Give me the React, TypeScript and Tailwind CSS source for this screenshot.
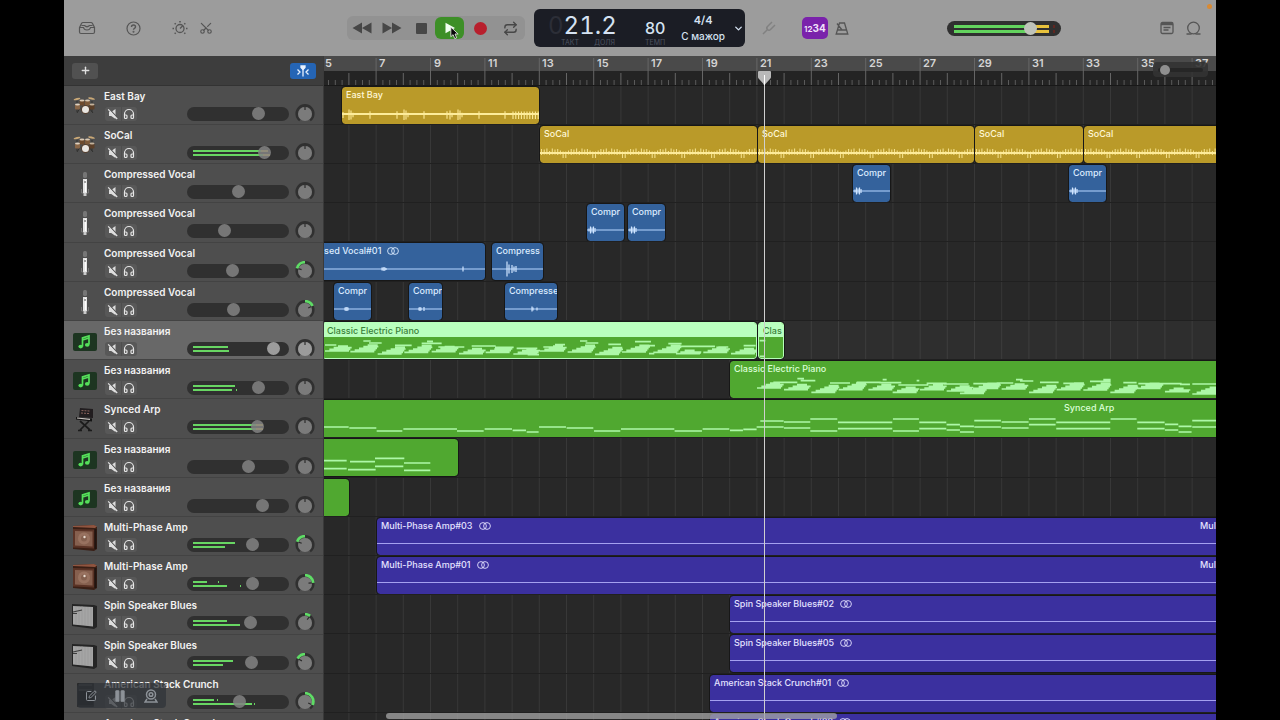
import React, { useState } from 'react';
import { ChevronDown, Headphones, Pause, Plus, Repeat, Scissors, SquarePen } from 'lucide-react';

type Kind = 'drums' | 'mic' | 'midi' | 'synth' | 'amp' | 'speaker' | 'stack';
type Color = 'yellow' | 'blue' | 'green' | 'purple';
type Seg = [number, number, number];

interface Clip {
  label?: string;
  x: number;
  w?: number;
  color: Color;
  labelX?: number;
  stereo?: boolean;
  selected?: boolean;
  wave?: 'beat' | 'groove' | 'line';
  hits?: [number, number][];
  notes?: Seg[];
  trailing?: string;
}

interface Track {
  name: string;
  kind: Kind;
  volume: number;
  pan?: number;
  meter?: [number, number];
  peaks?: [number, number];
  hot?: boolean;
  selected?: boolean;
  clips: Clip[];
}

const BAR = 27.2;
const barX = (bar: number) => 215.3 + BAR * (bar - 13);
const BARS = Array.from({ length: 60 }, (_, i) => i + 5);
const LAST_LABEL = 37;

// Chord figures: [x, bottom y, number of stacked notes], in thirds of a pixel
const CHORDS_A: Seg[] = [[0, 84, 3], [76, 86, 4], [158, 93, 4], [238, 88, 4], [320, 86, 3], [402, 92, 3], [482, 88, 3], [565, 93, 3], [645, 84, 3], [728, 87, 4], [810, 94, 4], [891, 87, 4], [985, 88, 4], [1053, 92, 2], [1135, 88, 3], [1218, 92, 3]];
const LEADS_A: Seg[] = [[0, 66, 34], [115, 54, 22], [132, 60, 38], [210, 67, 50], [290, 61, 60], [306, 55, 18], [340, 72, 78], [440, 69, 72], [510, 73, 56], [575, 76, 62], [655, 72, 34], [690, 65, 30], [765, 54, 22], [782, 60, 38], [850, 64, 38], [930, 56, 48], [960, 68, 30], [1030, 62, 40], [1060, 70, 110], [1180, 72, 30], [1256, 68, 36], [608, 95, 34], [972, 92, 16], [1098, 90, 30]];
const CHORDS_B: Seg[] = [[81, 81, 3], [162, 86, 3], [244, 94, 4], [326, 86, 4], [415, 86, 3], [488, 94, 3], [570, 86, 3], [650, 90, 3], [690, 97, 3], [733, 82, 3], [815, 84, 3], [897, 94, 4], [980, 86, 4], [1060, 87, 4], [1141, 94, 4], [1220, 82, 3], [1305, 92, 2], [1387, 99, 4]];
const LEADS_B: Seg[] = [[130, 64, 72], [202, 53, 20], [212, 59, 44], [300, 66, 60], [380, 64, 72], [458, 56, 12], [448, 65, 66], [505, 72, 90], [560, 59, 8], [590, 67, 60], [640, 69, 76], [730, 68, 80], [800, 66, 50], [858, 56, 20], [870, 60, 40], [930, 64, 56], [1000, 67, 60], [1080, 61, 62], [1120, 56, 22], [1180, 65, 40], [1225, 68, 130], [1350, 70, 30], [1387, 69, 110]];

const chord = ([x, y, n]: Seg): Seg[] =>
  Array.from({ length: n + 1 }, (_, i): Seg => [x + i * 13, y - i * 5, i === n ? 30 : 72 - i * 9]);

const BASS: Seg[] = [[0, 81, 74], [76, 84, 81], [158, 93, 77], [238, 87, 161], [399, 93, 80], [482, 87, 82], [566, 91, 40], [608, 96, 36], [645, 81, 81], [728, 84, 80], [810, 93, 79], [891, 87, 160], [1052, 93, 82], [1136, 87, 80], [1218, 91, 39], [1258, 88, 40],
  [1298, 81, 81], [1380, 84, 79], [1459, 93, 81], [1542, 86, 163], [1707, 93, 78], [1786, 86, 81], [1868, 90, 40], [1908, 96, 42], [1951, 81, 80], [2033, 84, 81], [2115, 74, 80], [2197, 86, 162], [2440, 86, 82], [2523, 90, 40], [2564, 96, 39], [2605, 81, 90],
  [1309, 63, 70], [1380, 66, 79], [1459, 57, 81], [1542, 67, 163], [1707, 57, 78], [1786, 67, 81], [1868, 74, 40], [1908, 79, 42], [1951, 62, 80], [2033, 66, 81], [2115, 57, 80], [2197, 67, 162], [2360, 57, 78], [2440, 67, 82], [2523, 73, 40], [2564, 79, 39], [2605, 62, 90]];
const PADS: Seg[] = [[0, 65, 68], [78, 68, 75], [153, 58, 88], [240, 72, 79], [0, 89, 68], [72, 92, 83], [153, 82, 85], [240, 94, 79]];

const VOCAL_HITS: [number, number][] = [[2, 3], [3.5, 7], [5, 5], [6.5, 7], [8, 4]];

const TRACKS: Track[] = [
  { name: 'East Bay', kind: 'drums', volume: 65, clips: [{ label: 'East Bay', x: 18, w: 197, color: 'yellow', wave: 'beat' }] },
  { name: 'SoCal', kind: 'drums', volume: 71, meter: [75, 77], hot: true, clips: [
    { label: 'SoCal', x: 216, w: 217, color: 'yellow', wave: 'groove' },
    { label: 'SoCal', x: 434, w: 216, color: 'yellow', wave: 'groove' },
    { label: 'SoCal', x: 651, w: 108, color: 'yellow', wave: 'groove' },
    { label: 'SoCal', x: 760, color: 'yellow', wave: 'groove' },
  ] },
  { name: 'Compressed Vocal', kind: 'mic', volume: 45, clips: [
    { label: 'Compr', x: 529, w: 37, color: 'blue', wave: 'line', hits: VOCAL_HITS },
    { label: 'Compr', x: 745, w: 37, color: 'blue', wave: 'line', hits: VOCAL_HITS },
  ] },
  { name: 'Compressed Vocal', kind: 'mic', volume: 31, clips: [
    { label: 'Compr', x: 263, w: 37, color: 'blue', wave: 'line', hits: VOCAL_HITS },
    { label: 'Compr', x: 304, w: 37, color: 'blue', wave: 'line', hits: VOCAL_HITS },
  ] },
  { name: 'Compressed Vocal', kind: 'mic', volume: 39, pan: -75, clips: [
    { label: 'Compressed Vocal#01', x: -43, w: 204, color: 'blue', wave: 'line', stereo: true, hits: [[101, 3], [102, 3], [103, 4], [104, 3], [105, 2], [182, 5]] },
    { label: 'Compress', x: 168, w: 51, color: 'blue', wave: 'line', hits: [[15, 15], [17, 9], [20, 8], [22, 5], [24, 6]] },
  ] },
  { name: 'Compressed Vocal', kind: 'mic', volume: 40, pan: 65, clips: [
    { label: 'Compr', x: 10, w: 37, color: 'blue', wave: 'line', hits: [[11, 3], [12, 4], [13, 4], [14, 3]] },
    { label: 'Compr', x: 85, w: 33, color: 'blue', wave: 'line', hits: [[10, 3], [11, 4], [12, 3], [15, 4]] },
    { label: 'Compresse', x: 181, w: 52, color: 'blue', wave: 'line', hits: [[27, 5], [28, 3], [32, 3]] },
  ] },
  { name: 'Без названия', kind: 'midi', volume: 80, meter: [35, 36], selected: true, clips: [
    { label: 'Classic Electric Piano', x: -2, w: 435, labelX: 4, color: 'green', selected: true, notes: [...CHORDS_A.flatMap(chord), ...LEADS_A] },
    { label: 'Clas', x: 434, w: 26, color: 'green', selected: true, notes: [[2, 53, 17], [2, 100, 14]] },
  ] },
  { name: 'Без названия', kind: 'midi', volume: 65, meter: [42, 39], peaks: [0, 43], clips: [
    { label: 'Classic Electric Piano', x: 406, color: 'green', notes: [...CHORDS_B.flatMap(chord), ...LEADS_B] },
  ] },
  { name: 'Synced Arp', kind: 'synth', volume: 64, meter: [70, 70], hot: true, clips: [
    { label: 'Synced Arp', x: -4, labelX: 744, color: 'green', notes: BASS },
  ] },
  { name: 'Без названия', kind: 'midi', volume: 55, clips: [{ x: -4, w: 138, color: 'green', notes: PADS }] },
  { name: 'Без названия', kind: 'midi', volume: 69, clips: [{ x: -4, w: 29, color: 'green' }] },
  { name: 'Multi-Phase Amp', kind: 'amp', volume: 59, pan: -70, meter: [42, 32], clips: [
    { label: 'Multi-Phase Amp#03', x: 53, color: 'purple', wave: 'line', stereo: true, trailing: 'Mul' },
  ] },
  { name: 'Multi-Phase Amp', kind: 'amp', volume: 59, pan: 85, meter: [14, 34], peaks: [25, 47], clips: [
    { label: 'Multi-Phase Amp#01', x: 53, color: 'purple', wave: 'line', stereo: true, trailing: 'Mul' },
  ] },
  { name: 'Spin Speaker Blues', kind: 'speaker', volume: 57, pan: 38, meter: [34, 47], clips: [
    { label: 'Spin Speaker Blues#02', x: 406, color: 'purple', wave: 'line', stereo: true },
  ] },
  { name: 'Spin Speaker Blues', kind: 'speaker', volume: 58, pan: -62, meter: [40, 30], clips: [
    { label: 'Spin Speaker Blues#05', x: 406, color: 'purple', wave: 'line', stereo: true },
  ] },
  { name: 'American Stack Crunch', kind: 'stack', volume: 46, pan: 115, meter: [21, 59], peaks: [24, 61], clips: [
    { label: 'American Stack Crunch#01', x: 386, color: 'purple', wave: 'line', stereo: true },
  ] },
  { name: 'American Stack Crunch', kind: 'stack', volume: 46, clips: [
    { label: 'American Stack Crunch#02', x: 386, color: 'purple', wave: 'line', stereo: true },
  ] },
];

const CLIP_BG: Record<Color, string> = {
  yellow: 'bg-[#ba9a29] text-[#fff8d8]',
  blue: 'bg-[#34629c] text-[#dcecff]',
  green: 'bg-[#50a830] text-[#dcffd8]',
  purple: 'bg-[#3b309f] text-[#e4e2ff]',
};
const INK: Record<Color, string> = { yellow: '#fdec9a', blue: '#b5d6ff', green: '#adf8a8', purple: '#a5a0f0' };

function TrackIcon({ kind }: { kind: Kind }) {
  if (kind === 'drums') return (
    <svg viewBox="0 0 25 26" className="w-[25px] h-[26px]">
      <path d="M5 7v11M20 7v11M8 14l-3 5M17 14l4 5" stroke="#30302e" strokeWidth="1" />
      <ellipse cx="5" cy="5" rx="3.500" ry="1" fill="#c9a877" transform="rotate(-14 5 5)" />
      <ellipse cx="19.500" cy="4.500" rx="3.500" ry="1" fill="#c9a877" transform="rotate(14 19.500 4.500)" />
      <rect x="7.500" y="6.500" width="5" height="5" rx="1" fill="#6d4a2d" /><rect x="13" y="6.500" width="5" height="5" rx="1" fill="#7d5a3a" />
      <ellipse cx="10" cy="6.500" rx="2.500" ry="1" fill="#d9c9b5" /><ellipse cx="15.500" cy="6.500" rx="2.500" ry="1" fill="#d9c9b5" />
      <rect x="3" y="10.500" width="5" height="5" rx="1" fill="#8a6748" /><rect x="17.500" y="10.500" width="5" height="5" rx="1" fill="#5b3f28" />
      <ellipse cx="5.500" cy="10.500" rx="2.500" ry="1" fill="#e0d2c0" /><ellipse cx="20" cy="10.500" rx="2.500" ry="1" fill="#c4b39d" />
      <circle cx="13.500" cy="15.500" r="4.200" fill="#5a3b24" /><circle cx="13.500" cy="15.500" r="3.500" fill="#e9e6e2" />
    </svg>
  );
  if (kind === 'mic') return (
    <svg viewBox="0 0 25 26" className="w-[25px] h-[26px]">
      <rect x="11" y="0" width="4" height="6" rx="1.500" fill="#767676" />
      <path d="M9.500 17v4h7v-4" fill="none" stroke="#747474" />
      <rect x="11" y="7" width="4" height="14" fill="#e4e4e4" /><path d="M13.500 8v12" stroke="#fff" strokeWidth="1" />
      <rect x="12" y="9" width="2" height="2" fill="#a0a0a0" /><rect x="11.500" y="21" width="3" height="3" fill="#c9c9c9" />
    </svg>
  );
  if (kind === 'midi') return (
    <svg viewBox="0 0 25 26" className="w-[25px] h-[26px]">
      <rect x="1" y="4" width="24" height="18" rx="2" fill="#1d3521" />
      <path d="M10.500 17.500V9l6.500-2v8.500M10.500 11l6.500-2" fill="none" stroke="#55e05a" strokeWidth="1.700" />
      <ellipse cx="8.700" cy="17.600" rx="2.300" ry="1.800" fill="#55e05a" /><ellipse cx="15.200" cy="15.900" rx="2.300" ry="1.800" fill="#55e05a" />
    </svg>
  );
  if (kind === 'synth') return (
    <svg viewBox="0 0 25 26" className="w-[25px] h-[26px]">
      <path d="M8 1l13 1v9l-14-1z" fill="#211d1f" /><path d="M9.500 3.500l9 .6M9 6l9 .6" stroke="#87625c" strokeWidth="1" strokeDasharray="2 1" />
      <path d="M4 10l16 1.500v3L4 12.500z" fill="#141414" /><path d="M5 11l13 1.300" stroke="#c9c3c0" strokeWidth="1.200" />
      <path d="M8 14l10 9M17 14l-9 9M6 23.500h4M16 23.500h4" stroke="#1b1b1b" strokeWidth="1.700" />
    </svg>
  );
  if (kind === 'amp') return (
    <svg viewBox="0 0 25 26" className="w-[25px] h-[26px]">
      <path d="M1 1l21-1 3 2v22l-3 2-21-2z" fill="#3a1f15" /><path d="M1 1l21-1 3 1.500-2 1.500-22-1z" fill="#905540" />
      <path d="M1 4l21 .5v19L1 22.500z" fill="#5a3326" /><path d="M3 6l17.500 .5v15L3 20.500z" fill="#86604f" />
      <circle cx="12" cy="13.500" r="6" fill="#987260" /><circle cx="12" cy="13.500" r="3" fill="#84604f" /><circle cx="12.500" cy="12" r="1.200" fill="#eadbd0" />
      <path d="M23.500 4v20" stroke="#201410" strokeWidth="2" />
    </svg>
  );
  if (kind === 'speaker') return (
    <svg viewBox="0 0 25 26" className="w-[25px] h-[26px]">
      <path d="M0 1l22 1 3 1v21l-3 2-22-3z" fill="#252525" /><path d="M1 3l20 1v19.500L1 21.500z" fill="#a5a5a5" />
      <path d="M4 3v18M7 3v19M10 3v19M13 4v18M16 4v19M19 4v19" stroke="#959595" strokeWidth=".6" />
      <path d="M1 9l9-2M1 10.500h4" stroke="#3d3d3d" strokeWidth="1.200" />
    </svg>
  );
  return (
    <svg viewBox="0 0 25 26" className="w-[25px] h-[26px]">
      <rect x="5" y="1" width="17" height="24" rx="1" fill="#262626" /><path d="M7 3h13M7 8h13" stroke="#555" /><path d="M6 9h15v14H6z" fill="#181818" />
    </svg>
  );
}

function PanKnob({ pan = 0, bright }: { pan?: number; bright?: boolean }) {
  const a = ((pan - 90) * Math.PI) / 180;
  const px = 10 + 8.300 * Math.cos(a);
  const py = 9.500 + 8.300 * Math.sin(a);
  return (
    <svg viewBox="0 0 20 20" className="w-5 h-5" role="img" aria-label="Pan">
      <path d="M5 16.300A8.300 8.300 0 1 1 15 16.300" fill="none" stroke="#303030" strokeWidth="2.600" />
      <circle cx="10" cy="10" r="7" fill={bright ? '#9b9b9b' : '#7b7b7b'} />
      <path d={`M${10 + 3.500 * Math.cos(a)} ${9.500 + 3.500 * Math.sin(a)}L${10 + 7 * Math.cos(a)} ${9.500 + 7 * Math.sin(a)}`} stroke="#2c2c2c" strokeWidth="1.200" />
      {pan !== 0 && <path d={`M10 1.200A8.300 8.300 0 0 ${pan > 0 ? 1 : 0} ${px} ${py}`} fill="none" stroke="#5fdc66" strokeWidth="2.800" />}
    </svg>
  );
}

function MuteIcon() {
  return (
    <svg viewBox="0 0 12 12" className="size-3">
      <path d="M2 4h2.200L8.500 1v10L4.200 8H2z" fill="#dcdcdc" />
      <path d="M2.200 1l8.800 9.500" stroke="#565656" strokeWidth="1.300" /><path d="M1.200 1.300l9 9.700" stroke="#e4e4e4" strokeWidth="1.200" />
    </svg>
  );
}

function VolumeSlider({ track, index }: { track: Track; index: number }) {
  const [value, setValue] = useState(track.volume);
  return (
    <div className="relative w-[102px] h-[14px] rounded-full bg-[#303030]">
      {track.meter && (
        <div className="absolute left-[6px] top-[4px] flex flex-col gap-[2px]">
          {track.meter.map((w, i) => (
            <div key={i} className="flex h-[2px]">
              <div className="bg-[#68d663]" style={{ width: track.hot ? w - 7 : w }} />
              {track.hot && <div className="w-[7px] bg-[#d9c24a]" />}
              {track.peaks && track.peaks[i] > 0 && <div className="w-px bg-[#68d663]" style={{ marginLeft: track.peaks[i] - w }} />}
            </div>
          ))}
        </div>
      )}
      <input
        type="range" min={0} max={89} value={value} aria-label={`${track.name} volume ${index + 1}`} onChange={e => setValue(Number(e.target.value))}
        className={`absolute inset-0 w-full h-full appearance-none bg-transparent [&::-webkit-slider-thumb]:appearance-none [&::-webkit-slider-thumb]:size-[13px] [&::-webkit-slider-thumb]:rounded-full ${track.selected ? '[&::-webkit-slider-thumb]:bg-[#9c9c9c]' : '[&::-webkit-slider-thumb]:bg-[#828282]/85'}`}
      />
    </div>
  );
}

function TrackHeader({ track, index }: { track: Track; index: number }) {
  return (
    <div className={`flex shrink-0 h-[39px] nth-[5n]:h-10 pl-2 pr-2 pt-px border-b border-[#434343] ${track.selected ? 'bg-[#686868]' : 'bg-[#4e4e4e]'}`}>
      <div className="w-8 pt-[7px]"><TrackIcon kind={track.kind} /></div>
      <div className="flex-1">
        <div className="h-[19px] leading-[19px] text-[10px] font-semibold text-[#f2f2f2] whitespace-nowrap">{track.name}</div>
        <div className="flex items-center h-[15px]">
          <div className="flex ml-px w-8 h-[14px] rounded-[3px] overflow-hidden bg-[#585858]">
            <button aria-label="Mute" className="flex-1 flex items-center justify-center border-r border-[#4e4e4e]"><MuteIcon /></button>
            <button aria-label="Solo" className="flex-1 flex items-center justify-center text-[#e6e6e6]"><Headphones size={12} strokeWidth={2.400} /></button>
          </div>
          <div className="ml-auto mr-[6px]"><VolumeSlider track={track} index={index} /></div>
          <PanKnob pan={track.pan} bright={track.selected} />
        </div>
      </div>
    </div>
  );
}

// Peaks for the drummer regions
const beatPath = Array.from({ length: 10 }, (_, i) => `M${171 + i * 2.800} 24.500v7.500`).join('')
  + [[1, 4], [7, 7], [9, 6], [11, 3], [28, 5], [55, 5], [62, 7], [64, 6], [66, 3], [82, 5], [105, 5], [108, 6], [110, 3], [116, 7], [118, 6], [120, 3], [137, 5], [163, 5]].map(([x, h]) => `M${x} ${28 - h / 1.300}v${h * 1.500}`).join('');
const groovePath = Array.from({ length: 90 }, (_, i) => {
  const k = (i * i * 5 + i * 3) % 11;
  const up = [4, 1.5, 2.500, 1.500, 4.500, 1.500, 2, 1.500, 3.500, 1.500, 2][k];
  const down = [2, 4.500, 1.500, 5, 1.500, 3.500, 1.500, 5, 1.500, 4, 2][k];
  return `M${1.500 + i * 2.700} ${27 - up}v${up + down}`;
}).join('');

function ClipArt({ clip }: { clip: Clip }) {
  const ink = INK[clip.color];
  const mid = clip.color === 'yellow' ? 27 : clip.color === 'blue' ? 26 : 25.5;
  return (
    <svg className="absolute inset-0 w-full h-full" aria-hidden="true">
      {clip.wave && <path d={`M0 ${mid}H2000`} stroke={ink} strokeWidth={clip.color === 'yellow' ? 1.800 : 1.200} />}
      {clip.wave === 'beat' && <path d={beatPath} stroke={ink} strokeWidth="1.100" />}
      {clip.wave === 'groove' && <path d={groovePath} stroke={ink} strokeWidth="1.100" opacity=".85" />}
      {clip.hits?.map(([x, h], i) => <path key={i} d={`M${x} ${mid - h / 2}v${h}`} stroke="#cfe4ff" strokeWidth="1.200" />)}
      {clip.notes && (
        <g transform={`translate(${Math.max(0, -clip.x)} 0) scale(.3333)`}>
          <path d={clip.notes.map(([x, y, l]) => `M${x} ${y}h${l}`).join('')} stroke={ink} strokeWidth="5" />
        </g>
      )}
    </svg>
  );
}

function StereoMark() {
  return (
    <svg viewBox="0 0 12 8" className="w-3 h-2 shrink-0" fill="none" stroke="currentColor" strokeWidth=".9">
      <circle cx="4" cy="4" r="3.400" /><circle cx="8" cy="4" r="3.400" />
    </svg>
  );
}

function ClipBox({ clip }: { clip: Clip }) {
  const size: React.CSSProperties = clip.w ? { left: clip.x, width: clip.w } : { left: clip.x, right: 0 };
  return (
    <div
      className={`absolute top-px h-[37px] overflow-hidden outline-1 outline-[#171717] ${clip.w ? 'rounded-[3px]' : 'rounded-l-[3px]'} ${CLIP_BG[clip.color]} ${clip.selected ? 'border border-[#b6ffb9]' : ''}`}
      style={size}
    >
      {clip.selected && <div className="h-[14px] bg-[#b9ffbe]" />}
      <ClipArt clip={clip} />
      <div
        className={`absolute inset-x-0 top-0 flex items-center gap-[6px] h-[15px] pl-1 text-[9px] font-medium whitespace-nowrap overflow-hidden ${clip.selected ? 'text-[#39803a]' : ''}`}
        style={clip.labelX ? { paddingLeft: clip.labelX } : undefined}
      >
        {clip.label}
        {clip.stereo && <StereoMark />}
        {clip.trailing && <span className="ml-auto w-4">{clip.trailing}</span>}
      </div>
    </div>
  );
}

function Ruler() {
  return (
    <div className="relative shrink-0 h-[30px] overflow-hidden bg-[#242424] border-b border-[#181818]">
      <div className="h-[15px] bg-[#4a4a4a]" />
      <svg className="absolute inset-0 w-full h-full" aria-hidden="true">
        <path d={BARS.map(b => `M${barX(b)} ${b % 2 ? 2 : 17}V30`).join('')} stroke="#666" />
        <path d={BARS.map(b => [1, 2, 3].map(q => `M${barX(b) + q * 6.800} 24V30`).join('')).join('')} stroke="#5a5a5a" />
      </svg>
      {BARS.filter(b => b % 2 && b <= LAST_LABEL).map(b => (
        <span key={b} className="absolute top-0 h-[15px] leading-[15px] text-[11px] font-semibold text-[#d4d4d4]" style={{ left: Math.round(barX(b)) + 3 }}>{b}</span>
      ))}
      <div className="absolute right-2 top-[6px] w-[55px] h-[15px] rounded-[4px] bg-[#333]/90">
        <input type="range" defaultValue={6} aria-label="Zoom" className="block w-full h-full px-[5px] appearance-none bg-transparent [&::-webkit-slider-runnable-track]:h-[4px] [&::-webkit-slider-runnable-track]:rounded-full [&::-webkit-slider-runnable-track]:bg-[#262626] [&::-webkit-slider-thumb]:appearance-none [&::-webkit-slider-thumb]:size-[10px] [&::-webkit-slider-thumb]:-mt-[3px] [&::-webkit-slider-thumb]:rounded-full [&::-webkit-slider-thumb]:bg-[#8f8f8f]" />
      </div>
    </div>
  );
}

function Transport() {
  return (
    <div className="flex items-center h-6 w-[178px] rounded-[6px] bg-[#929292] text-[#474747]">
      <button aria-label="Rewind" className="w-[29px] flex justify-center"><svg viewBox="0 0 20 12" className="w-5 h-3" fill="currentColor"><path d="M10 .5v11L.5 6zM19.500 .5v11L10 6z" /></svg></button>
      <button aria-label="Forward" className="w-8 flex justify-center"><svg viewBox="0 0 20 12" className="w-5 h-3" fill="currentColor"><path d="M10 .5v11L19.500 6zM.5 .5v11L10 6z" /></svg></button>
      <button aria-label="Stop" className="w-[27px] flex justify-center"><span className="size-[11px] rounded-[1px] bg-[#474747]" /></button>
      <button aria-label="Play" className="relative w-[29px] h-[22px] flex items-center justify-center rounded-[6px] bg-[#3d8f27]">
        <svg viewBox="0 0 12 12" className="size-3"><path d="M1.500 .8v10.400L11 6z" fill="#f0fff0" /></svg>
        <svg viewBox="0 0 12 16" className="absolute left-[15px] top-[9px] w-[10px] h-[14px]"><path d="M1 1v11.500l2.700-2.500 2 4.700 2.300-1-2-4.500h3.800z" fill="#080808" stroke="#eee" strokeWidth="1" /></svg>
      </button>
      <button aria-label="Record" className="w-8 flex justify-center"><span className="size-[13px] rounded-full bg-[#b81f2d]" /></button>
      <button aria-label="Cycle" className="flex-1 flex justify-center"><Repeat size={15} strokeWidth={2.200} /></button>
    </div>
  );
}

function Lcd() {
  return (
    <div className="flex items-center w-[211px] h-[38px] rounded-[6px] bg-[#1b1d25] text-[#d5e2f2]">
      <div className="ml-[14px] w-[67px] pt-[5px]">
        <div className="flex leading-6 text-[24px] tabular-nums">
          <span className="text-[#2c2e37]">0</span><span>21.</span><span className="ml-auto">2</span>
        </div>
        <div className="flex justify-between pl-[13px] leading-[9px] text-[7px] text-[#4d5360]"><span>ТАКТ</span><span>ДОЛЯ</span></div>
      </div>
      <div className="ml-[30px] flex flex-col items-center pt-[9px]">
        <span className="leading-5 text-[16px] font-medium">80</span>
        <span className="leading-[9px] text-[7px] text-[#4d5360]">ТЕМП</span>
      </div>
      <div className="ml-auto mr-2 text-center text-[11px] font-semibold leading-4"><div>4/4</div><div className="text-[10px] font-medium">С мажор</div></div>
      <button aria-label="Display mode" className="mr-px"><ChevronDown size={11} strokeWidth={3} /></button>
    </div>
  );
}

function Toolbar() {
  return (
    <header className="relative flex shrink-0 items-center h-14 bg-[#9c9c9c] text-[#555]">
      <div className="flex items-center pl-[14px] w-[283px]">
        <button aria-label="Library">
          <svg viewBox="0 0 18 14" className="w-[18px] h-[14px]" fill="none" stroke="currentColor" strokeWidth="1.200"><path d="M1.500 6.500l2-4q.5-1 1.500-1h8q1 0 1.500 1l2 4v4.500q0 1.500-1.500 1.500h-12q-1.500 0-1.500-1.500zM1.500 6.500h4q.5 2.500 3.500 2.500t3.500-2.500h4M3.500 4.500h3q2.500 2.500 5 0h3" /></svg>
        </button>
        <button aria-label="Help" className="ml-[30px]">
          <svg viewBox="0 0 15 15" className="size-[15px]" fill="none" stroke="currentColor" strokeWidth="1.200"><circle cx="7.500" cy="7.500" r="6.500" /><path d="M5.500 6q0-2 2-2t2 1.800q0 1-1 1.500t-1 1.500" strokeWidth="1.400" /><circle cx="7.500" cy="10.800" r=".4" /></svg>
        </button>
        <button aria-label="Smart controls" className="ml-[31px]">
          <svg viewBox="0 0 16 16" className="w-4 h-4" fill="none" stroke="currentColor" strokeWidth="1.300"><circle cx="8" cy="8.500" r="4" /><path d="M8 8.500l3-3" /><path d="M8 1v1.500M2.700 3.200l1 1M13.300 3.200l-1 1M.5 8.500H2M14 8.500h1.500M2.700 13.800l1-1M13.300 13.800l-1-1" strokeWidth="1.600" /></svg>
        </button>
        <button aria-label="Editors" className="ml-[11px]"><Scissors size={14} strokeWidth={2} className="-rotate-90" /></button>
      </div>
      <Transport />
      <div className="ml-[9px]"><Lcd /></div>
      <button aria-label="Tuner" className="ml-4 text-[#818181]">
        <svg viewBox="0 0 16 16" className="size-4" fill="none" stroke="currentColor" strokeWidth="1.500"><path d="M2 14l4.500-4.500M11 2L6.500 6.500q-1.500 1.500 0 3t3 0L14 5" /></svg>
      </button>
      <button aria-label="Count in" className="ml-[25px] w-[26px] h-[22px] rounded-[5px] bg-[#7a22ab] text-[#f1e2fa] font-bold text-[10px] leading-[22px]"><span className="text-[7px]">1</span><span className="text-[8px]">2</span>34</button>
      <button aria-label="Metronome" className="ml-[7px]">
        <svg viewBox="0 0 14 14" className="size-[14px]" fill="none" stroke="currentColor" strokeWidth="1.300"><path d="M4.500 2h5L12.800 13H1.200zM2.500 9h9M7 9L2 2.500" /></svg>
      </button>
      <div className="relative ml-auto mr-[99px] w-[114px] h-[15px] rounded-full bg-[#303030]">
        <div className="absolute left-[7px] top-[4px] flex flex-col gap-[2px]">
          {[0, 1].map(i => <div key={i} className="flex h-[3px]"><div className="w-[77px] bg-[#63d35e]" /><div className="w-[18px] bg-[#e8c23c]" /><div className="ml-1 w-[2px] bg-[#612620]" /></div>)}
        </div>
        <input type="range" defaultValue={76} aria-label="Master volume" className="absolute inset-0 w-full h-full appearance-none bg-transparent [&::-webkit-slider-thumb]:appearance-none [&::-webkit-slider-thumb]:size-[13px] [&::-webkit-slider-thumb]:rounded-full [&::-webkit-slider-thumb]:bg-[#bfc3ba]" />
      </div>
      <div className="flex items-center gap-3 mr-[15px]">
        <button aria-label="Notes"><svg viewBox="0 0 14 14" className="size-[14px]" fill="none" stroke="currentColor" strokeWidth="1.300"><rect x="1" y="1.500" width="12" height="11" rx="1.500" /><path d="M1 3h12" strokeWidth="2.500" /><path d="M3.500 6.500h7M3.500 9h5" /></svg></button>
        <button aria-label="Loops"><svg viewBox="0 0 15 14" className="w-[15px] h-[14px]" fill="none" stroke="currentColor" strokeWidth="1.300"><circle cx="7.500" cy="7" r="5.800" /><path d="M.5 13h4q1.500 0 1-1M14.500 13h-4q-1.500 0-1-1" /></svg></button>
      </div>
      <span className="absolute right-1 top-1 size-[5px] rounded-full bg-[#d98a33]" />
    </header>
  );
}

export default function App() {
  return (
    <div className="flex h-screen px-16 bg-black overflow-hidden font-['Inter',sans-serif] cursor-default">
      <div className="relative flex flex-col flex-1 min-w-0">
        <Toolbar />
        <div className="flex flex-1 min-h-0">
          <aside className="flex flex-col w-[260px] shrink-0 overflow-hidden border-r border-[#3a3a3a]">
            <div className="flex shrink-0 items-center justify-between h-[30px] pl-2 pr-[7px] bg-[#3d3d3d] border-b border-[#333]">
              <button aria-label="Add track" className="flex items-center justify-center w-[26px] h-4 rounded-[3px] bg-[#515151] text-[#e0e0e0]"><Plus size={11} strokeWidth={3} /></button>
              <button aria-label="Catch playhead" className="flex items-center justify-center w-[26px] h-4 rounded-[3px] bg-[#2565b5]">
                <svg viewBox="0 0 14 12" className="w-[14px] h-3" fill="none" stroke="#e8f2ff" strokeWidth="1.300"><path d="M7 2v9.500" /><path d="M5 1h4v1.500L7 4.500 5 2.500z" fill="#e8f2ff" /><path d="M1.500 4.500L4 7 1.500 9.500M12.500 4.500L10 7l2.500 2.500" /></svg>
              </button>
            </div>
            {TRACKS.map((t, i) => <TrackHeader key={i} track={t} index={i} />)}
          </aside>
          <main className="relative flex flex-col flex-1 min-w-0 overflow-hidden bg-[#282828]">
            <Ruler />
            <div className="relative flex flex-col">
              <svg className="absolute inset-0 w-full h-full" aria-hidden="true"><path d={BARS.map(b => `M${barX(b)} 0V700`).join('')} stroke="#383838" /></svg>
              {TRACKS.map((t, i) => (
                <div key={i} className={`relative shrink-0 h-[39px] nth-[5n+1]:h-10 nth-[2]:h-[39px] overflow-hidden border-b border-[#202020] ${t.selected ? 'bg-white/3' : ''}`}>
                  {t.clips.map((c, j) => <ClipBox key={j} clip={c} />)}
                </div>
              ))}
            </div>
            <div className="absolute left-[440px] top-[15px] bottom-0 w-px bg-[#cfcfcf]" />
            <svg viewBox="0 0 13 14" className="absolute left-[434px] top-[15px] w-[13px] h-[14px]"><path d="M1 0h11q1 0 1 1v5q0 1-.8 1.800L6.500 14 .8 7.800Q0 7 0 6V1q0-1 1-1z" fill="#b9b9b9" /><path d="M6.500 4v10" stroke="#fff" /></svg>
            <div className="absolute left-[62px] bottom-[1px] w-[451px] h-[6px] rounded-full bg-[#a5a5a5]/75" />
          </main>
        </div>
        <div className="absolute left-[13px] bottom-3 flex items-center justify-around w-[89px] h-[25px] rounded-[4px] bg-[#30343a]/75 text-[#8d9298]">
          <button aria-label="Edit"><SquarePen size={12} strokeWidth={2} /></button>
          <button aria-label="Pause"><Pause size={14} strokeWidth={2} fill="currentColor" /></button>
          <button aria-label="Camera"><svg viewBox="0 0 14 14" className="size-[14px]" fill="none" stroke="currentColor" strokeWidth="1.500"><circle cx="7" cy="5.500" r="4.500" /><circle cx="7" cy="5.500" r="1.800" /><path d="M3 10l-2 3h12l-2-3" /></svg></button>
        </div>
      </div>
    </div>
  );
}
